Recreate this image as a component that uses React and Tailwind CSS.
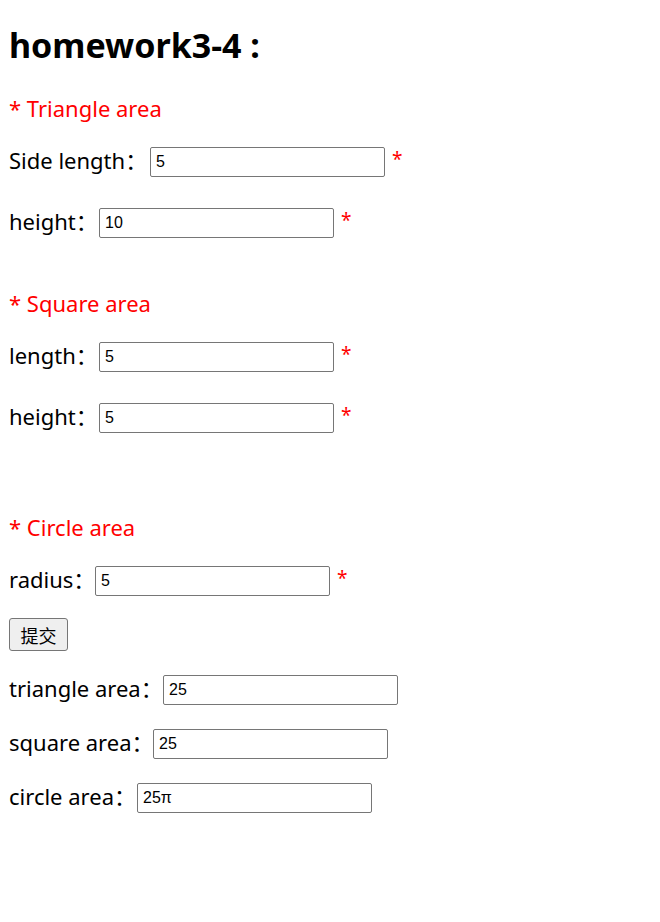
import React, { useState } from "react";

const labelFont = { fontFamily: '"Noto Sans", "Noto Sans CJK SC", sans-serif' };

const Field = ({ label, value, required, labelWidth, className = "" }) => (
  <div className={`flex items-center h-[30px] ${className}`}>
    <label className={`${labelWidth} shrink-0 pb-[5px] text-[22px] text-black leading-[30px] whitespace-pre`}>{label}</label>
    <input
      type="text"
      defaultValue={value}
      className="w-[235px] h-[30px] border border-[#767676] rounded-[2px] px-[5px] text-[16px] text-black outline-none"
      style={{ fontFamily: '"Liberation Sans", Arial, sans-serif' }}
    />
    {required && <span className="ml-[7px] text-[19px] text-[#ff0000] leading-[30px] -mt-[7px]">*</span>}
  </div>
);

const SectionTitle = ({ children, className = "" }) => (
  <div className={`h-[30px] leading-[28px] text-[22px] text-[#ff0000] ${className}`}>
    * {children}
  </div>
);

export default function App() {
  const [submitted, setSubmitted] = useState(true);

  return (
    <div className="min-h-screen bg-white px-[9px] pt-[25px] flex flex-col items-start" style={labelFont}>
      <h1 className="h-[40px] leading-[40px] text-[34px] font-bold text-black">homework3-4 :</h1>

      <SectionTitle className="mt-[29px]">Triangle area</SectionTitle>
      <Field className="mt-[23px]" labelWidth="w-[141px]" label="Side length：" value="5" required />
      <Field className="mt-[31px]" labelWidth="w-[90px]" label="height：" value="10" required />

      <SectionTitle className="mt-[51px]">Square area</SectionTitle>
      <Field className="mt-[23px]" labelWidth="w-[90px]" label="length：" value="5" required />
      <Field className="mt-[31px]" labelWidth="w-[90px]" label="height：" value="5" required />

      <SectionTitle className="mt-[80px]">Circle area</SectionTitle>
      <Field className="mt-[23px]" labelWidth="w-[86px]" label="radius：" value="5" required />

      <button
        type="button"
        onClick={() => setSubmitted(true)}
        className="mt-[22px] h-[33px] w-[59px] bg-[#efefef] border border-[#767676] rounded-[3px] text-[18px] text-black leading-none"
        style={{ fontFamily: '"Noto Sans CJK SC", sans-serif' }}
      >
        提交
      </button>

      <Field className="mt-[24px]" labelWidth="w-[154px]" label="triangle area：" value={submitted ? "25" : ""} />
      <Field className="mt-[24px]" labelWidth="w-[144px]" label="square area：" value={submitted ? "25" : ""} />
      <Field className="mt-[24px]" labelWidth="w-[128px]" label="circle area：" value={submitted ? "25π" : ""} />
    </div>
  );
}
